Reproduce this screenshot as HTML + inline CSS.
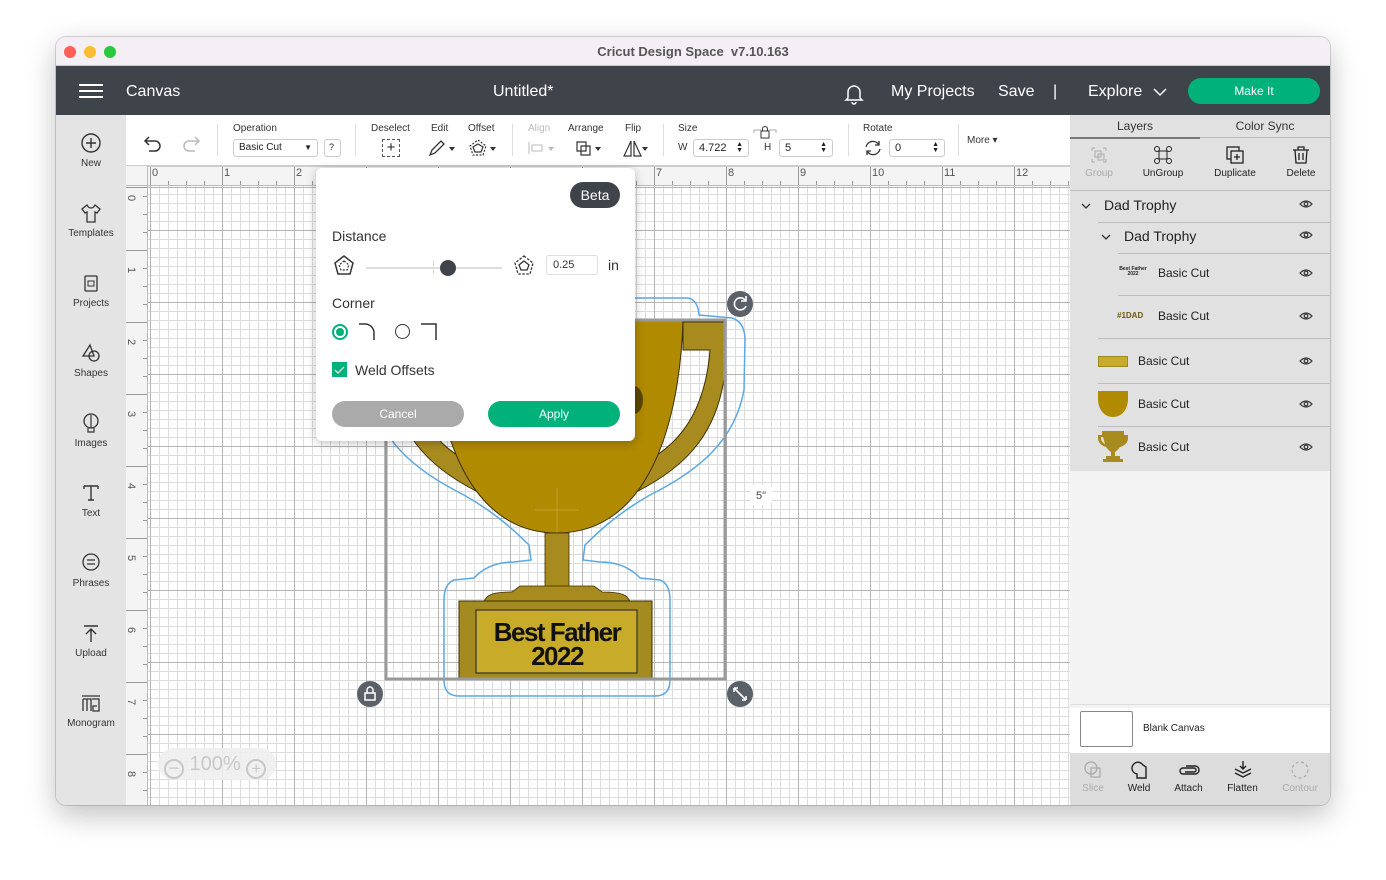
<!DOCTYPE html>
<html><head><meta charset="utf-8">
<style>
*{box-sizing:border-box;margin:0;padding:0}
body{width:1386px;height:880px;background:#fff;font-family:"Liberation Sans",sans-serif;position:relative;overflow:hidden;color:#222}
.a{position:absolute}
.win{left:56px;top:37px;width:1274px;height:768px;border-radius:10px;overflow:hidden;box-shadow:0 10px 30px rgba(0,0,0,.25),0 0 0 1px rgba(0,0,0,.15)}
.lbl{font-size:10px;color:#333}
.side{text-align:center;width:70px;left:0;font-size:10px;color:#333}
.side svg{display:block;margin:0 auto 4px}
.inp{border:1px solid #ccc;border-radius:3px;background:#fff;font-size:11px;padding:2px 5px;height:18px}
.hr{position:absolute;height:1px;background:#bdbdbd}
.tool{text-align:center;font-size:10px;color:#222}
</style></head><body>
<div class="a win">
 <div class="a" style="left:0;top:0;width:1274px;height:29px;background:#f4eff4;border-bottom:1px solid #ccc"></div>
 <div class="a" style="left:8px;top:9px;width:12px;height:12px;border-radius:6px;background:#fe5f57"></div>
 <div class="a" style="left:28px;top:9px;width:12px;height:12px;border-radius:6px;background:#febc2e"></div>
 <div class="a" style="left:48px;top:9px;width:12px;height:12px;border-radius:6px;background:#28c840"></div>
 <div class="a" style="left:0;top:7px;width:1274px;text-align:center;font-size:13px;font-weight:bold;color:#555">Cricut Design Space&nbsp; v7.10.163</div>
 <div class="a" style="left:0;top:29px;width:1274px;height:49px;background:#3f444b"></div>
 <div class="a" style="left:23px;top:47px;width:24px;height:2px;background:#fff;box-shadow:0 6px 0 #fff,0 12px 0 #fff"></div>
 <div class="a" style="left:70px;top:46px;color:#fff;font-size:16px">Canvas</div>
 <div class="a" style="left:437px;top:46px;color:#fff;font-size:16px">Untitled*</div>
 <svg class="a" style="left:788px;top:46px" width="20" height="22" viewBox="0 0 20 22"><path d="M4 15V9a6 6 0 0 1 12 0v6l2 2H2z M8 19a2 2 0 0 0 4 0" fill="none" stroke="#fff" stroke-width="1.5"/></svg>
 <div class="a" style="left:835px;top:46px;color:#fff;font-size:16px">My Projects</div>
 <div class="a" style="left:942px;top:46px;color:#fff;font-size:16px">Save</div>
 <div class="a" style="left:997px;top:46px;color:#fff;font-size:16px">|</div>
 <div class="a" style="left:1032px;top:46px;color:#fff;font-size:16px">Explore</div>
 <svg class="a" style="left:1096px;top:50px" width="16" height="10"><path d="M2 2l6 6 6-6" fill="none" stroke="#fff" stroke-width="1.5"/></svg>
 <div class="a" style="left:1132px;top:41px;width:132px;height:26px;border-radius:13px;background:#00b17a;color:#fff;font-size:12px;text-align:center;line-height:26px">Make It</div>
 <div class="a" style="left:0;top:78px;width:70px;height:690px;background:#e4e4e4"></div>
 <div class="a side" style="top:95px"><svg width="22" height="22"><circle cx="11" cy="11" r="9" fill="none" stroke="#333" stroke-width="1.4"/><path d="M11 6v10M6 11h10" stroke="#333" stroke-width="1.4"/></svg>New</div>
 <div class="a side" style="top:165px"><svg width="22" height="22"><path d="M7 3l-5 4 3 4 2-1v10h8V10l2 1 3-4-5-4c-1 2-2 3-4 3s-3-1-4-3z" fill="none" stroke="#333" stroke-width="1.3"/></svg>Templates</div>
 <div class="a side" style="top:235px"><svg width="22" height="22"><rect x="5" y="4" width="12" height="15" rx="1" fill="none" stroke="#333" stroke-width="1.3"/><path d="M8 9h6v5H8z" fill="none" stroke="#333"/></svg>Projects</div>
 <div class="a side" style="top:305px"><svg width="22" height="22"><path d="M10 3l-7 11h11z" fill="none" stroke="#333" stroke-width="1.3"/><circle cx="14" cy="14" r="5" fill="none" stroke="#333" stroke-width="1.3"/></svg>Shapes</div>
 <div class="a side" style="top:375px"><svg width="22" height="22"><circle cx="11" cy="9" r="7" fill="none" stroke="#333" stroke-width="1.3"/><path d="M8 16v4h6v-4M11 3v13" fill="none" stroke="#333" stroke-width="1.2"/></svg>Images</div>
 <div class="a side" style="top:445px"><svg width="22" height="22"><path d="M4 4h14M11 4v14M8 18h6M4 4v3M18 4v3" fill="none" stroke="#333" stroke-width="1.4"/></svg>Text</div>
 <div class="a side" style="top:515px"><svg width="22" height="22"><circle cx="11" cy="10" r="8" fill="none" stroke="#333" stroke-width="1.3"/><path d="M7 8h8M7 12h8" stroke="#333" stroke-width="1.3"/></svg>Phrases</div>
 <div class="a side" style="top:585px"><svg width="22" height="22"><path d="M4 4h14M11 7v13M6 12l5-5 5 5" fill="none" stroke="#333" stroke-width="1.4"/></svg>Upload</div>
 <div class="a side" style="top:655px"><svg width="22" height="22"><path d="M2 4h18M3 7v12M3 7h8v12M7 7v12M12 7h7v12h-6v-5h4" fill="none" stroke="#333" stroke-width="1.3"/></svg>Monogram</div>
 <div class="a" style="left:70px;top:78px;width:944px;height:51px;background:#fff;border-bottom:1px solid #ccc"></div>
</div>
<svg class="a" style="left:143px;top:134px" width="20" height="18"><path d="M6 3L2 7l4 4M2 7h10a5 5 0 0 1 0 10H6" fill="none" stroke="#333" stroke-width="1.5"/></svg>
<svg class="a" style="left:181px;top:134px" width="20" height="18"><path d="M14 3l4 4-4 4M18 7H8a5 5 0 0 0 0 10h6" fill="none" stroke="#bbb" stroke-width="1.5"/></svg>
<div class="a" style="left:217px;top:124px;width:1px;height:32px;background:#ddd"></div>
<div class="a lbl" style="left:233px;top:123px">Operation</div>
<div class="a inp" style="left:233px;top:139px;width:85px;font-size:10px">Basic Cut<span style="float:right;font-size:8px;margin-top:1px">▼</span></div>
<div class="a inp" style="left:324px;top:139px;width:17px;font-size:9px;padding:2px 4px">?</div>
<div class="a" style="left:355px;top:124px;width:1px;height:32px;background:#ddd"></div>
<div class="a lbl" style="left:371px;top:123px">Deselect</div>
<div class="a" style="left:382px;top:139px;width:18px;height:18px;border:1px dashed #555;text-align:center;font-size:15px;line-height:15px">+</div>
<div class="a lbl" style="left:431px;top:123px">Edit</div>
<svg class="a" style="left:427px;top:139px" width="30" height="18"><path d="M3 16l2-5 9-9 3 3-9 9z" fill="none" stroke="#333" stroke-width="1.3"/><path d="M22 8h6l-3 4z" fill="#333"/></svg>
<div class="a lbl" style="left:468px;top:123px">Offset</div>
<svg class="a" style="left:468px;top:139px" width="30" height="18"><path d="M10 1l8 6-3 9H5L2 7z" fill="none" stroke="#333" stroke-width="1.2" stroke-dasharray="2 1.5"/><path d="M10 5l5 3-2 5H7L5 8z" fill="none" stroke="#333" stroke-width="1.2"/><path d="M22 8h6l-3 4z" fill="#333"/></svg>
<div class="a" style="left:512px;top:124px;width:1px;height:32px;background:#ddd"></div>
<div class="a lbl" style="left:528px;top:123px;color:#bbb">Align</div>
<svg class="a" style="left:528px;top:140px" width="28" height="16"><path d="M1 2v12M4 5h10v6H4z" fill="none" stroke="#bbb"/><path d="M20 7h6l-3 4z" fill="#bbb"/></svg>
<div class="a lbl" style="left:568px;top:123px">Arrange</div>
<svg class="a" style="left:575px;top:139px" width="28" height="18"><path d="M2 3h9v9H2z M6 7h9v9H6z" fill="none" stroke="#333" stroke-width="1.2"/><path d="M20 8h6l-3 4z" fill="#333"/></svg>
<div class="a lbl" style="left:625px;top:123px">Flip</div>
<svg class="a" style="left:622px;top:139px" width="28" height="18"><path d="M9 2v15H2z M12 2v15h7z" fill="none" stroke="#333" stroke-width="1.2"/><path d="M20 8h6l-3 4z" fill="#333"/></svg>
<div class="a" style="left:663px;top:124px;width:1px;height:32px;background:#ddd"></div>
<div class="a lbl" style="left:678px;top:123px">Size</div>
<div class="a lbl" style="left:678px;top:142px">W</div>
<div class="a inp" style="left:693px;top:139px;width:56px">4.722<span style="float:right;font-size:7px;line-height:6px">▲<br>▼</span></div>
<svg class="a" style="left:752px;top:125px" width="26" height="14"><path d="M2 8V5h7M17 5h7v3" fill="none" stroke="#aaa"/><rect x="9" y="6" width="8" height="7" fill="none" stroke="#333"/><path d="M10.5 6V4a2.5 2.5 0 0 1 5 0v2" fill="none" stroke="#333"/></svg>
<div class="a lbl" style="left:764px;top:142px">H</div>
<div class="a inp" style="left:779px;top:139px;width:54px">5<span style="float:right;font-size:7px;line-height:6px">▲<br>▼</span></div>
<div class="a" style="left:848px;top:124px;width:1px;height:32px;background:#ddd"></div>
<div class="a lbl" style="left:863px;top:123px">Rotate</div>
<svg class="a" style="left:863px;top:139px" width="20" height="18"><path d="M3 8a7 7 0 0 1 13-2M17 10a7 7 0 0 1-13 2M16 2v4h-4M4 16v-4h4" fill="none" stroke="#333" stroke-width="1.3"/></svg>
<div class="a inp" style="left:889px;top:139px;width:56px">0<span style="float:right;font-size:7px;line-height:6px">▲<br>▼</span></div>
<div class="a" style="left:958px;top:124px;width:1px;height:32px;background:#ddd"></div>
<div class="a lbl" style="left:967px;top:135px">More ▾</div>

<div class="a" style="left:126px;top:166px;width:944px;height:639px;background:#fff"></div>
<div class="a" style="left:148px;top:186px;width:922px;height:619px;
background-image:
repeating-linear-gradient(90deg,#b4b4b4 0 1px,transparent 1px 72px),
repeating-linear-gradient(0deg,#b4b4b4 0 1px,transparent 1px 72px),
repeating-linear-gradient(90deg,#dcdcdc 0 1px,transparent 1px 9px),
repeating-linear-gradient(0deg,#dcdcdc 0 1px,transparent 1px 9px);
background-position:2px 0,0 2px,2px 0,0 2px"></div>
<div class="a" style="left:126px;top:166px;width:944px;height:20px;background:#f4f4f4;border-bottom:1px solid #bbb;border-top:1px solid #ccc;
background-image:repeating-linear-gradient(90deg,#999 0 1px,transparent 1px 72px),repeating-linear-gradient(90deg,#999 0 1px,transparent 1px 18px);background-size:100% 20px,100% 5px;background-position:24px 0,24px 14px;background-repeat:repeat-x"></div>
<div class="a" style="left:126px;top:166px;width:22px;height:639px;background:#f4f4f4;border-right:1px solid #bbb;
background-image:repeating-linear-gradient(0deg,#999 0 1px,transparent 1px 72px),repeating-linear-gradient(0deg,#999 0 1px,transparent 1px 18px);background-size:22px 100%,5px 100%;background-position:0 22px,17px 22px;background-repeat:repeat-y"></div>
<div class="a" style="left:126px;top:166px;width:22px;height:20px;background:#f4f4f4;border-right:1px solid #bbb;border-bottom:1px solid #bbb"></div>
<div class="a" style="top:167px;left:0;font-size:11px;color:#555">
<span class="a" style="left:152px">0</span><span class="a" style="left:224px">1</span><span class="a" style="left:296px">2</span><span class="a" style="left:368px">3</span><span class="a" style="left:440px">4</span><span class="a" style="left:512px">5</span><span class="a" style="left:584px">6</span><span class="a" style="left:656px">7</span><span class="a" style="left:728px">8</span><span class="a" style="left:800px">9</span><span class="a" style="left:872px">10</span><span class="a" style="left:944px">11</span><span class="a" style="left:1016px">12</span></div>
<div class="a" style="left:128px;top:0;font-size:11px;color:#555">
<span class="a" style="top:192px;transform:rotate(90deg)">0</span><span class="a" style="top:264px;transform:rotate(90deg)">1</span><span class="a" style="top:336px;transform:rotate(90deg)">2</span><span class="a" style="top:408px;transform:rotate(90deg)">3</span><span class="a" style="top:480px;transform:rotate(90deg)">4</span><span class="a" style="top:552px;transform:rotate(90deg)">5</span><span class="a" style="top:624px;transform:rotate(90deg)">6</span><span class="a" style="top:696px;transform:rotate(90deg)">7</span><span class="a" style="top:768px;transform:rotate(90deg)">8</span></div>

<svg class="a" style="left:0;top:0" width="1386" height="880">
<path d="M557,298 L688,298 Q698,300 699,315 L732,318 Q745,322 745,340 L744,390 C735,440 700,470 650,495 C620,512 600,530 585,545 L583,560 L600,562 Q625,562 640,578 L660,580 Q670,584 670,600 L670,680 Q670,696 655,696 L459,696 Q444,696 444,680 L444,600 Q444,584 454,580 L474,578 Q489,562 514,562 L531,560 L529,545 C514,530 494,512 464,495 C414,470 379,440 370,390 L369,340 Q369,322 382,318 L415,315 Q416,300 426,298 Z" fill="none" stroke="#5aa8e4" stroke-width="1.5"/>
<path d="M683,322 L725,322 L725,372 C718,430 690,465 636,492 L645,462 C688,440 706,400 710,350 L683,350 Z" fill="#a88b1e" stroke="#3a3000" stroke-width="1"/>
<path d="M431,322 L389,322 L389,372 C396,430 424,465 478,492 L469,462 C426,440 408,400 404,350 L431,350 Z" fill="#a88b1e" stroke="#3a3000" stroke-width="1"/>
<path d="M431,320 L683,320 C680,420 650,533 557,533 C464,533 434,420 431,320 Z" fill="#b08a00" stroke="#3a3000" stroke-width="1"/>
<ellipse cx="634" cy="400" rx="9" ry="14" fill="#5a4600"/>
<path d="M557,488v46M535,510h44" stroke="#c9a840" stroke-width="0.7"/>
<rect x="545" y="533" width="24" height="60" fill="#a88b1e" stroke="#3a3000" stroke-width="0.8"/>
<path d="M484,602 C486,595 492,592 512,592 L520,586 L594,586 L602,592 C622,592 628,595 630,602 Z" fill="#a88b1e" stroke="#3a3000" stroke-width="0.8"/>
<rect x="459" y="601" width="193" height="78" fill="#a38b22" stroke="#3a3000" stroke-width="1"/>
<rect x="476" y="610" width="161" height="63" fill="#c9ab2a" stroke="#333" stroke-width="1.2"/>
<text x="557" y="641" text-anchor="middle" font-family="Liberation Sans" font-weight="bold" font-size="26" letter-spacing="-1.5" fill="#111">Best Father</text>
<text x="557" y="665" text-anchor="middle" font-family="Liberation Sans" font-weight="bold" font-size="26" letter-spacing="-1.5" fill="#111">2022</text>
<rect x="386" y="320" width="339" height="359" fill="none" stroke="#9a9a9a" stroke-width="3"/>
<circle cx="740" cy="304" r="13" fill="#5b6168"/><path d="M745,300 a6,6 0 1 0 1,6 M746,296v5h-5" fill="none" stroke="#fff" stroke-width="1.6"/>
<circle cx="370" cy="694" r="13" fill="#5b6168"/><rect x="365" y="693" width="10" height="7" fill="none" stroke="#fff" stroke-width="1.5"/><path d="M367,693v-3a3,3 0 0 1 6,0v3" fill="none" stroke="#fff" stroke-width="1.5"/>
<circle cx="740" cy="694" r="13" fill="#5b6168"/><path d="M734,688l12,12M734,688h4M734,688v4M746,700h-4M746,700v-4" stroke="#fff" stroke-width="1.6"/>
<rect x="750" y="485" width="22" height="20" rx="4" fill="#fff"/>
<text x="761" y="499" text-anchor="middle" font-family="Liberation Sans" font-size="11" fill="#444">5"</text>
</svg>
<div class="a" style="left:158px;top:748px;width:118px;height:32px;border-radius:16px;background:rgba(238,238,238,.9);color:#c8c8c8;font-size:20px;line-height:32px;padding-left:6px">
<span style="display:inline-block;width:20px;height:20px;border:2px solid #c8c8c8;border-radius:10px;vertical-align:-4px;text-align:center;line-height:14px;font-size:18px">−</span> 100% <span style="display:inline-block;width:20px;height:20px;border:2px solid #c8c8c8;border-radius:10px;vertical-align:-4px;text-align:center;line-height:15px;font-size:17px">+</span></div>

<div class="a" style="left:316px;top:168px;width:319px;height:273px;background:#fff;border-radius:6px;box-shadow:0 2px 10px rgba(0,0,0,.25)">
 <div class="a" style="left:254px;top:14px;width:50px;height:26px;border-radius:13px;background:#3f444b;color:#fff;font-size:14px;text-align:center;line-height:26px">Beta</div>
 <div class="a" style="left:16px;top:60px;font-size:14px;color:#333">Distance</div>
 <svg class="a" style="left:16px;top:86px" width="24" height="24"><path d="M12 2l9 7-3 11H6L3 9z" fill="none" stroke="#333" stroke-width="1.5"/><path d="M12 7l5 4-2 5H9l-2-5z" fill="none" stroke="#333" stroke-width="1.2" stroke-dasharray="2 1.5"/></svg>
 <div class="a" style="left:50px;top:99px;width:136px;height:2px;background:#ddd"></div>
 <div class="a" style="left:117px;top:92px;width:1px;height:14px;background:#ddd"></div>
 <div class="a" style="left:124px;top:92px;width:16px;height:16px;border-radius:8px;background:#3f444b"></div>
 <svg class="a" style="left:196px;top:86px" width="24" height="24"><path d="M12 2l9 7-3 11H6L3 9z" fill="none" stroke="#333" stroke-width="1.3" stroke-dasharray="2.5 1.5"/><path d="M12 7l5 4-2 5H9l-2-5z" fill="none" stroke="#333" stroke-width="1.3"/></svg>
 <div class="a" style="left:230px;top:87px;width:52px;height:20px;border:1px solid #ddd;border-radius:3px;font-size:11px;color:#333;padding:3px 6px">0.25</div>
 <div class="a" style="left:292px;top:89px;font-size:14px;color:#333">in</div>
 <div class="a" style="left:16px;top:127px;font-size:14px;color:#333">Corner</div>
 <div class="a" style="left:16px;top:156px;width:16px;height:16px;border-radius:8px;border:2px solid #00b17a"></div>
 <div class="a" style="left:20px;top:160px;width:8px;height:8px;border-radius:4px;background:#00b17a"></div>
 <svg class="a" style="left:42px;top:154px" width="20" height="20"><path d="M1 2h6a9 9 0 0 1 9 9v7" fill="none" stroke="#333" stroke-width="1.5"/></svg>
 <div class="a" style="left:79px;top:156px;width:15px;height:15px;border-radius:8px;border:1.5px solid #333"></div>
 <svg class="a" style="left:104px;top:154px" width="20" height="20"><path d="M1 2h15v16" fill="none" stroke="#333" stroke-width="1.5"/></svg>
 <div class="a" style="left:16px;top:194px;width:15px;height:15px;background:#00b17a"></div>
 <svg class="a" style="left:16px;top:194px" width="15" height="15"><path d="M3 8l3 3 6-6" fill="none" stroke="#fff" stroke-width="1.2"/></svg>
 <div class="a" style="left:39px;top:194px;font-size:14px;color:#333">Weld Offsets</div>
 <div class="a" style="left:16px;top:233px;width:132px;height:26px;border-radius:13px;background:#aaa;color:#fff;font-size:12px;text-align:center;line-height:26px">Cancel</div>
 <div class="a" style="left:172px;top:233px;width:132px;height:26px;border-radius:13px;background:#00b17a;color:#fff;font-size:12px;text-align:center;line-height:26px">Apply</div>
</div>

<div class="a" style="left:1070px;top:115px;width:260px;height:356px;background:#e1e1e1"></div>
<div class="a" style="left:1070px;top:471px;width:260px;height:237px;background:#f3f3f3"></div>
<div class="a" style="left:1070px;top:137px;width:260px;height:1px;background:#bbb"></div>
<div class="a" style="left:1070px;top:137px;width:130px;height:2px;background:#777"></div>
<div class="a" style="left:1070px;top:119px;width:130px;text-align:center;font-size:12px;color:#333">Layers</div>
<div class="a" style="left:1200px;top:119px;width:130px;text-align:center;font-size:12px;color:#333">Color Sync</div>
<div class="a tool" style="left:1079px;top:145px;width:40px;color:#aaa"><svg width="20" height="20"><path d="M3 3h3M3 3v3M17 3h-3M17 3v3M3 17h3M3 17v-3M17 17h-3M17 17v-3" stroke="#aaa"/><rect x="6" y="6" width="6" height="6" fill="none" stroke="#aaa"/><rect x="9" y="9" width="6" height="6" fill="none" stroke="#aaa"/></svg><br>Group</div>
<div class="a tool" style="left:1138px;top:145px;width:50px"><svg width="22" height="20"><circle cx="5" cy="4" r="2.5" fill="none" stroke="#222"/><circle cx="17" cy="4" r="2.5" fill="none" stroke="#222"/><circle cx="5" cy="16" r="2.5" fill="none" stroke="#222"/><circle cx="17" cy="16" r="2.5" fill="none" stroke="#222"/><rect x="7" y="6" width="8" height="8" fill="none" stroke="#222"/></svg><br>UnGroup</div>
<div class="a tool" style="left:1210px;top:145px;width:50px"><svg width="20" height="20"><rect x="2" y="2" width="12" height="12" fill="none" stroke="#222" stroke-width="1.3"/><rect x="6" y="6" width="12" height="12" fill="#e1e1e1" stroke="#222" stroke-width="1.3"/><path d="M12 9v6M9 12h6" stroke="#222" stroke-width="1.3"/></svg><br>Duplicate</div>
<div class="a tool" style="left:1281px;top:145px;width:40px"><svg width="20" height="20"><path d="M2 5h16M7 5V2h6v3M4 5l1 13h10l1-13M8 8v7M12 8v7" fill="none" stroke="#222" stroke-width="1.3"/></svg><br>Delete</div>
<div class="hr" style="left:1070px;top:190px;width:260px"></div>
<svg class="a" style="left:1081px;top:202px" width="10" height="8"><path d="M1 2l4 4 4-4" fill="none" stroke="#333" stroke-width="1.3"/></svg>
<div class="a" style="left:1104px;top:197px;font-size:14px">Dad Trophy</div>
<div class="hr" style="left:1098px;top:222px;width:232px"></div>
<svg class="a" style="left:1101px;top:233px" width="10" height="8"><path d="M1 2l4 4 4-4" fill="none" stroke="#333" stroke-width="1.3"/></svg>
<div class="a" style="left:1124px;top:228px;font-size:14px">Dad Trophy</div>
<div class="hr" style="left:1118px;top:253px;width:212px"></div>
<div class="a" style="left:1118px;top:267px;font-size:5px;font-weight:bold;line-height:5px;text-align:center;width:30px">Best Father<br>2022</div>
<div class="a" style="left:1158px;top:266px;font-size:12px">Basic Cut</div>
<div class="hr" style="left:1118px;top:295px;width:212px"></div>
<div class="a" style="left:1117px;top:311px;font-size:8px;font-weight:bold;color:#6b5a10">#1DAD</div>
<div class="a" style="left:1158px;top:309px;font-size:12px">Basic Cut</div>
<div class="hr" style="left:1098px;top:338px;width:232px"></div>
<div class="a" style="left:1098px;top:356px;width:30px;height:11px;background:#c9ab2a;border:1px solid #a08a20"></div>
<div class="a" style="left:1138px;top:354px;font-size:12px">Basic Cut</div>
<div class="hr" style="left:1098px;top:383px;width:232px"></div>
<svg class="a" style="left:1098px;top:391px" width="30" height="26"><path d="M0 0h30v8C30 18 24 26 15 26S0 18 0 8z" fill="#b08a00"/></svg>
<div class="a" style="left:1138px;top:397px;font-size:12px">Basic Cut</div>
<div class="hr" style="left:1098px;top:426px;width:232px"></div>
<svg class="a" style="left:1098px;top:431px" width="30" height="31"><path d="M4 0h22v4h4v3c0 5-4 8-8 9-2 3-4 4-5 5v4h5v3h3v3H5v-3h3v-3h5v-4c-1-1-3-2-5-5C4 15 0 12 0 7V4h4zM3 6v1c0 3 2 5 4 6L5 6zM27 6v1c0 3-2 5-4 6l2-7z" fill="#a88b1e"/></svg>
<div class="a" style="left:1138px;top:440px;font-size:12px">Basic Cut</div>
<svg class="a" style="left:0;top:0" width="1386" height="480">
<g fill="none" stroke="#333" stroke-width="1.2">
<path d="M1300 204q6-6 12 0q-6 6-12 0z"/><circle cx="1306" cy="204" r="1.8"/>
<path d="M1300 235q6-6 12 0q-6 6-12 0z"/><circle cx="1306" cy="235" r="1.8"/>
<path d="M1300 273q6-6 12 0q-6 6-12 0z"/><circle cx="1306" cy="273" r="1.8"/>
<path d="M1300 316q6-6 12 0q-6 6-12 0z"/><circle cx="1306" cy="316" r="1.8"/>
<path d="M1300 361q6-6 12 0q-6 6-12 0z"/><circle cx="1306" cy="361" r="1.8"/>
<path d="M1300 404q6-6 12 0q-6 6-12 0z"/><circle cx="1306" cy="404" r="1.8"/>
<path d="M1300 447q6-6 12 0q-6 6-12 0z"/><circle cx="1306" cy="447" r="1.8"/>
</g></svg>
<div class="a" style="left:1070px;top:704px;width:260px;height:1px;background:#ddd"></div>
<div class="a" style="left:1080px;top:711px;width:53px;height:36px;background:#fff;border:1px solid #888;border-radius:2px"></div>
<div class="a" style="left:1143px;top:723px;font-size:10px;color:#222">Blank Canvas</div>
<div class="a" style="left:1070px;top:753px;width:260px;height:52px;background:#dcdcdc;border-bottom-right-radius:10px"></div>
<div class="a tool" style="left:1073px;top:760px;width:40px;color:#aaa"><svg width="20" height="20"><circle cx="8" cy="8" r="6" fill="none" stroke="#aaa" stroke-width="1.3"/><path d="M8 8h9v9H8z" fill="none" stroke="#aaa" stroke-width="1.3"/></svg><br>Slice</div>
<div class="a tool" style="left:1119px;top:760px;width:40px"><svg width="20" height="20"><path d="M3 9a6 6 0 0 1 11-4l3 2v11H8v-4a6 6 0 0 1-5-5z" fill="none" stroke="#222" stroke-width="1.4"/></svg><br>Weld</div>
<div class="a tool" style="left:1166px;top:760px;width:45px"><svg width="22" height="20"><path d="M8 6h9a4 4 0 0 1 0 8H5a3 3 0 0 1 0-6h11a2 2 0 0 1 0 4H7" fill="none" stroke="#222" stroke-width="1.4"/></svg><br>Attach</div>
<div class="a tool" style="left:1220px;top:760px;width:45px"><svg width="22" height="20"><path d="M11 1v8M8 6l3 3 3-3M3 9l8 4 8-4M3 13l8 4 8-4" fill="none" stroke="#222" stroke-width="1.4"/></svg><br>Flatten</div>
<div class="a tool" style="left:1276px;top:760px;width:48px;color:#aaa"><svg width="22" height="20"><circle cx="11" cy="10" r="8" fill="none" stroke="#aaa" stroke-width="1.3" stroke-dasharray="3 2.5"/></svg><br>Contour</div>
</body></html>
